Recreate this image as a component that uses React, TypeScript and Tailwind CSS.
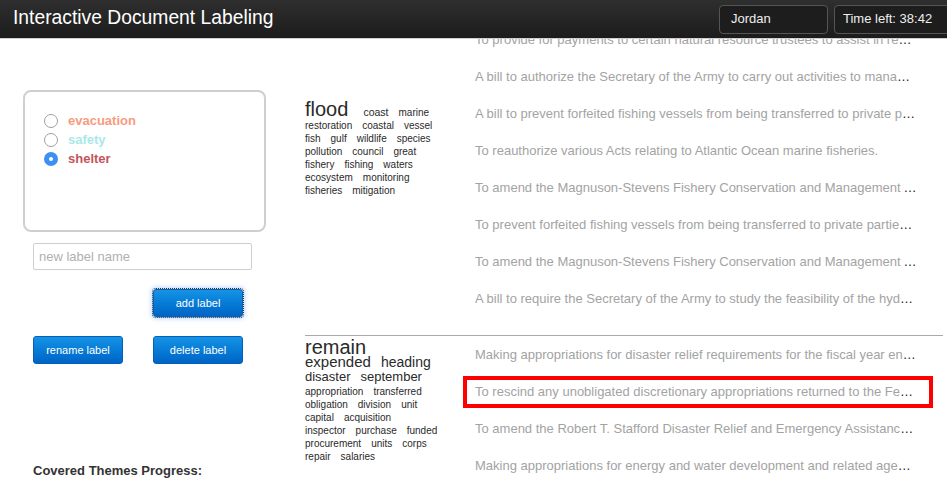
import React from "react";

const font = { fontFamily: '"Liberation Sans", Arial, Helvetica, sans-serif' };

type W = [string, number, number?];

const cloud1: { h: number; words: W[] }[] = [
  { h: 22, words: [["flood", 20, 15], ["coast", 10.5], ["marine", 10]] },
  { h: 13, words: [["restoration", 10], ["coastal", 10], ["vessel", 10]] },
  { h: 13, words: [["fish", 10], ["gulf", 10], ["wildlife", 10], ["species", 10]] },
  { h: 13, words: [["pollution", 10], ["council", 10], ["great", 10]] },
  { h: 13, words: [["fishery", 10], ["fishing", 10], ["waters", 10]] },
  { h: 13, words: [["ecosystem", 10], ["monitoring", 10]] },
  { h: 13, words: [["fisheries", 10], ["mitigation", 10]] },
];

const cloud2: { h: number; words: W[] }[] = [
  { h: 17, words: [["remain", 20]] },
  { h: 16, words: [["expended", 15], ["heading", 14]] },
  { h: 17, words: [["disaster", 13], ["september", 13]] },
  { h: 13, words: [["appropriation", 10], ["transferred", 10]] },
  { h: 13, words: [["obligation", 10], ["division", 10], ["unit", 10]] },
  { h: 13, words: [["capital", 10], ["acquisition", 10]] },
  { h: 13, words: [["inspector", 10], ["purchase", 10], ["funded", 10]] },
  { h: 13, words: [["procurement", 10], ["units", 10], ["corps", 10]] },
  { h: 13, words: [["repair", 10], ["salaries", 10]] },
];

const docs1 = [
  "To provide for payments to certain natural resource trustees to assist in restoring natural resources damaged as a result of the Deepwater Horizon oil spill.",
  "A bill to authorize the Secretary of the Army to carry out activities to manage and control invasive species.",
  "A bill to prevent forfeited fishing vessels from being transferred to private parties.",
  "To reauthorize various Acts relating to Atlantic Ocean marine fisheries.",
  "To amend the Magnuson-Stevens Fishery Conservation and Management Act to improve fisheries.",
  "To prevent forfeited fishing vessels from being transferred to private parties, and for other purposes.",
  "To amend the Magnuson-Stevens Fishery Conservation and Management Act to extend the program.",
  "A bill to require the Secretary of the Army to study the feasibility of the hydrological separation of the Great Lakes.",
];

const docs2 = [
  "Making appropriations for disaster relief requirements for the fiscal year ending September 30, 2013.",
  "To rescind any unobligated discretionary appropriations returned to the Federal Government.",
  "To amend the Robert T. Stafford Disaster Relief and Emergency Assistance Act to improve assistance.",
  "Making appropriations for energy and water development and related agencies for the fiscal year.",
];

function Cloud({ lines }: { lines: { h: number; words: W[] }[] }) {
  return (
    <div className="w-[158px] shrink-0 text-[#2a2a2a]">
      {lines.map((l, i) => (
        <div key={i} className="flex items-baseline whitespace-nowrap" style={{ height: l.h }}>
          {l.words.map(([w, s, m], j) => (
            <span key={j} className="leading-none" style={{ fontSize: s, marginRight: m ?? 10 }}>
              {w}
            </span>
          ))}
        </div>
      ))}
    </div>
  );
}

function Docs({ docs, selected }: { docs: string[]; selected?: number }) {
  return (
    <div className="w-[470px] shrink-0 flex flex-col gap-[5px] py-[2.5px]">
      {docs.map((d, i) => (
        <div
          key={i}
          className={
            "h-[32px] border-4 pl-2 pr-[12px] flex items-center " +
            (selected === i ? "border-[#ff0000]" : "border-transparent")
          }
        >
          <div className="truncate text-[13px] text-[#222] w-full">
            <span className="text-[#a3a3a3]">{d}</span>
          </div>
        </div>
      ))}
    </div>
  );
}

function Radio({ checked }: { checked?: boolean }) {
  return checked ? (
    <span className="w-[14px] h-[14px] rounded-full bg-[#3d8ff2] flex items-center justify-center shrink-0">
      <span className="w-[4px] h-[4px] rounded-full bg-white" />
    </span>
  ) : (
    <span className="w-[14px] h-[14px] rounded-full border border-[#a0a0a0] bg-white shrink-0" />
  );
}

function Btn({ children, focus }: { children: React.ReactNode; focus?: boolean }) {
  return (
    <div
      className={
        "w-[90px] h-[28px] rounded-[3px] border border-[#0660b8] bg-gradient-to-b from-[#1593e6] to-[#0064c6] text-white text-[11px] flex items-center justify-center " +
        (focus ? "outline-1 outline-dotted outline-[#333] shadow-[0_0_4px_2px_rgba(80,150,240,0.35)]" : "")
      }
    >
      {children}
    </div>
  );
}

export default function App() {
  return (
    <div className="relative w-[947px] h-[486px] overflow-hidden bg-white" style={font}>
      {/* header overlay */}
      <div className="absolute top-0 left-0 w-[947px] h-[39px] z-10 flex items-center overflow-hidden bg-gradient-to-b from-[#2f2f2f] to-[#1c1c1c] border-b border-[#cfcfcf]">
        <div className="w-[719px] shrink-0 pl-[13px] text-white text-[19.3px] leading-none pb-[2px]">
          Interactive Document Labeling
        </div>
        <div className="w-[109px] h-[29px] shrink-0 rounded-[4px] border border-[#555] bg-[#1d1d1d] text-[#eee] text-[13px] flex items-center pl-[11px]">
          Jordan
        </div>
        <div className="w-[125px] h-[29px] shrink-0 ml-[6px] rounded-[4px] border border-[#555] bg-[#1d1d1d] text-[#eee] text-[13px] flex items-center pl-[8px]">
          Time left: 38:42
        </div>
      </div>

      <div className="flex">
        {/* left column */}
        <div className="w-[305px] shrink-0 pt-[90px] pl-[23px]">
          <div className="w-[243px] h-[142px] rounded-[8px] border-2 border-[#cfcfcf] pt-[19px] pl-[19px]">
            {[
              ["evacuation", "text-[#f89b7e]", false],
              ["safety", "text-[#a9e8ea]", false],
              ["shelter", "text-[#c5545a]", true],
            ].map(([t, c, ch], i) => (
              <div key={i} className="h-[19px] flex items-center">
                <Radio checked={ch as boolean} />
                <span className={"ml-[10px] text-[13px] font-bold " + c}>{t as string}</span>
              </div>
            ))}
          </div>
          <div className="pl-[10px]">
            <div className="mt-[11px] w-[219px] h-[27px] border border-[#cfcfcf] rounded-[2px] flex items-center pl-[5px] text-[13px] text-[#b0b0b0]">
              new label name
            </div>
            <div className="mt-[19px] pl-[120px]">
              <Btn focus>add label</Btn>
            </div>
            <div className="mt-[19px] flex gap-[30px]">
              <Btn>rename label</Btn>
              <Btn>delete label</Btn>
            </div>
            <div className="mt-[97px] text-[13px] font-bold text-[#333]">Covered Themes Progress:</div>
          </div>
        </div>

        {/* groups */}
        <div className="w-[638px] shrink-0">
          <div className="flex pt-[21px] pb-[18px]">
            <div className="pt-[78px]">
              <Cloud lines={cloud1} />
            </div>
            <Docs docs={docs1} />
          </div>
          <div className="flex border-t border-[#aaaaaa]">
            <div className="pt-[1px]">
              <Cloud lines={cloud2} />
            </div>
            <Docs docs={docs2} selected={1} />
          </div>
        </div>
      </div>
    </div>
  );
}
